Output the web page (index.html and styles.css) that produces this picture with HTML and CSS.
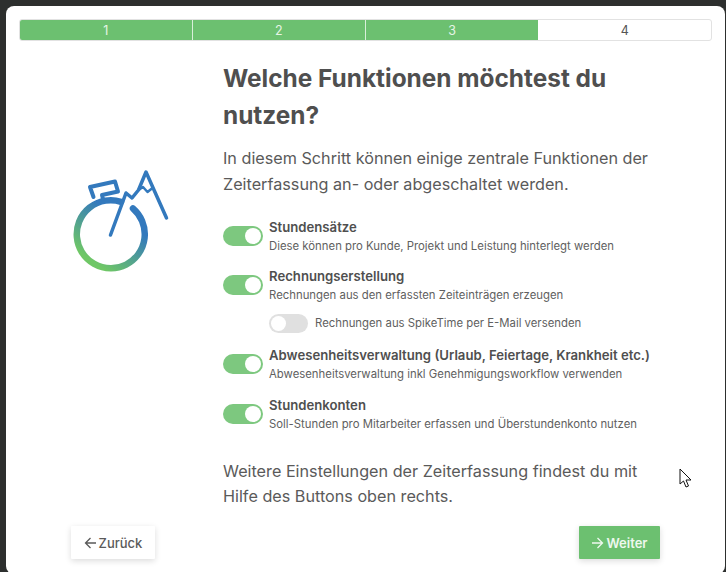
FILE: index.html
```html
<!DOCTYPE html>
<html lang="de">
<head>
<meta charset="utf-8">
<title>Funktionen</title>
<link rel="stylesheet" href="styles.css">
</head>
<body>
<main class="modal">
  <div class="steps">
    <div class="step done">1</div>
    <div class="step done">2</div>
    <div class="step done">3</div>
    <div class="step">4</div>
  </div>
  <div class="content">
    <div class="logo-col">
      <svg class="logo" width="120" height="120" viewBox="60 160 120 120" fill="none">
        <defs>
          <linearGradient id="g" x1="142" y1="212" x2="100" y2="272" gradientUnits="userSpaceOnUse">
            <stop offset="0.25" stop-color="#3379bd"/>
            <stop offset="0.95" stop-color="#6fc766"/>
          </linearGradient>
        </defs>
        <path d="M133 209.500 A34 34 0 1 1 121 202.800" stroke="url(#g)" stroke-width="6.500" stroke-linecap="round"/>
        <path d="M93.500 198 L90 188 L115 182.500 L118 192.500 L102 196 L103 200" stroke="#3379bd" stroke-width="4" stroke-linejoin="round" stroke-linecap="round"/>
        <path d="M110.500 236 L126 194 L132 199 L138.500 191 L146 173 L166.500 219" stroke="#3379bd" stroke-width="3.500" stroke-linejoin="round" stroke-linecap="round"/>
        <path d="M138.500 191 L143 188 L147.500 193 L152.500 189" stroke="#3379bd" stroke-width="2.500" stroke-linejoin="round" stroke-linecap="round"/>
      </svg>
    </div>
    <div class="main-col">
      <h1>Welche Funktionen möchtest du nutzen?</h1>
      <p class="lead">In diesem Schritt können einige zentrale Funktionen der Zeiterfassung an- oder abgeschaltet werden.</p>
      <div class="options">
        <div class="option">
          <span class="toggle on"></span>
          <div><div class="opt-title">Stundensätze</div><div class="opt-desc">Diese können pro Kunde, Projekt und Leistung hinterlegt werden</div></div>
        </div>
        <div class="option">
          <span class="toggle on"></span>
          <div><div class="opt-title">Rechnungserstellung</div><div class="opt-desc">Rechnungen aus den erfassten Zeiteinträgen erzeugen</div></div>
        </div>
        <div class="sub-option">
          <span class="toggle off"></span>
          <div class="opt-desc sub-label">Rechnungen aus SpikeTime per E-Mail versenden</div>
        </div>
        <div class="option">
          <span class="toggle on"></span>
          <div><div class="opt-title">Abwesenheitsverwaltung (Urlaub, Feiertage, Krankheit etc.)</div><div class="opt-desc">Abwesenheitsverwaltung inkl Genehmigungsworkflow verwenden</div></div>
        </div>
        <div class="option">
          <span class="toggle on"></span>
          <div><div class="opt-title">Stundenkonten</div><div class="opt-desc">Soll-Stunden pro Mitarbeiter erfassen und Überstundenkonto nutzen</div></div>
        </div>
      </div>
      <p class="lead foot">Weitere Einstellungen der Zeiterfassung findest du mit Hilfe des Buttons oben rechts.</p>
    </div>
  </div>
  <div class="actions">
    <button class="btn back"><svg width="13" height="12" viewBox="0 0 13 12" fill="none"><path d="M12 6H1.500M6.500 1 1.500 6l5 5" stroke="currentColor" stroke-width="1.300"/></svg>Zurück</button>
    <button class="btn next"><svg width="13" height="12" viewBox="0 0 13 12" fill="none"><path d="M1 6h10.500M6.500 1l5 5-5 5" stroke="currentColor" stroke-width="1.300"/></svg>Weiter</button>
  </div>
  <svg class="cursor" width="14" height="20" viewBox="0 0 14 20"><path d="M1 1v15l3.500-3 2.500 6 2.500-1-2.500-6H12z" fill="#fff" stroke="#111" stroke-width="1"/></svg>
</main>
</body>
</html>
```
FILE: styles.css
```css
* { box-sizing: border-box; }
html, body { margin: 0; height: 572px; overflow: hidden; }
body {
  background: #2d2f2e;
  padding: 6px 1px 0 6px;
  font-family: Inter, "Liberation Sans", sans-serif;
  color: #4c4c4c;
}
.modal {
  position: relative;
  height: 568px;
  background: #fff;
  border-radius: 8px;
  padding: 13px 13px 0 13px;
}
.steps {
  display: flex;
  height: 22px;
  border: 1px solid #e2e2e2;
  border-radius: 3px;
  overflow: hidden;
}
.step {
  flex: 1;
  display: flex;
  align-items: center;
  justify-content: center;
  font-size: 12.500px;
  color: #555;
}
.step.done {
  flex: 0 0 172.800px;
  background: #6cc070;
  color: #e6f5e6;
  border-right: 1px solid #d9efda;
}
.step.done:nth-child(3) { border-right: 0; }
.content { display: flex; }
.logo-col { width: 204px; flex: none; padding: 118px 0 0 41px; }
.logo { display: block; }
.main-col { flex: 1; padding-top: 19px; }
h1 {
  margin: 0 0 12px;
  font-size: 24.400px;
  line-height: 37px;
  font-weight: 700;
  color: #4f4f4f;
  width: 440px;
}
.lead {
  margin: 0;
  font-size: 16.200px;
  line-height: 25.500px;
  color: #5a5a5a;
  width: 440px;
}
.options { margin-top: 21px; display: flex; flex-direction: column; }
.option { display: flex; gap: 6px; margin-bottom: 13px; height: 36px; }
.option:nth-child(4) { margin-bottom: 14px; }
.toggle {
  position: relative;
  flex: none;
  width: 40px;
  height: 20px;
  margin-top: 8px;
  border-radius: 10px;
  background: #7dc87f;
}
.toggle::after {
  content: "";
  position: absolute;
  top: 2px;
  right: 2px;
  width: 16px;
  height: 16px;
  border-radius: 50%;
  background: #fff;
}
.toggle.off { background: #e0e0e0; width: 39px; height: 19px; margin-top: 0; }
.toggle.off::after { right: auto; left: 2px; top: 2px; width: 15px; height: 15px; }
.opt-title { font-size: 13.170px; font-weight: 600; line-height: 18px; color: #4f4f4f; }
.opt-desc { font-size: 11.350px; line-height: 18px; margin-top: 1px; color: #606060; }
.sub-option { display: flex; gap: 7px; margin: -2px 0 12px 46px; height: 20px; }
.sub-label { margin-top: 0; line-height: 19px; }
.lead.foot { margin-top: 14px; line-height: 25px; }
.actions {
  display: flex;
  justify-content: space-between;
  padding: 0 52px;
  margin-top: 17px;
}
.btn {
  display: flex;
  align-items: center;
  justify-content: center;
  gap: 2px;
  height: 33px;
  border: 0;
  border-radius: 1px;
  font: 500 13px Inter, "Liberation Sans", sans-serif;
  box-shadow: 0 2px 6px rgba(0, 0, 0, .14);
}
.back { width: 84px; background: #fff; color: #5a5a5a; }
.next { width: 81px; background: #6cc070; color: #eef8ee; font-weight: 600; }
.cursor { position: absolute; left: 673px; top: 462px; }
```
